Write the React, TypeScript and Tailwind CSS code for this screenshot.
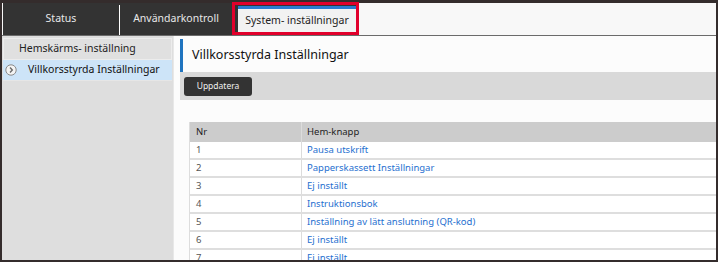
import React from "react";

const rows: [string, string][] = [
  ["1", "Pausa utskrift"],
  ["2", "Papperskassett Inställningar"],
  ["3", "Ej inställt"],
  ["4", "Instruktionsbok"],
  ["5", "Inställning av lätt anslutning (QR-kod)"],
  ["6", "Ej inställt"],
  ["7", "Ej inställt"],
];

export default function App() {
  return (
    <div className="w-[718px] h-[262px] overflow-hidden bg-[#fcfcfc] border-2 border-[#342c2c] flex flex-col font-['Noto_Sans',sans-serif]">
      {/* tab bar */}
      <div className="h-[34px] flex items-stretch bg-[#f8f8f8] border-t border-[#342c2c] border-b border-b-[#6b6b6b] shrink-0">
        <div className="ml-px w-[116px] bg-[#333333] text-[#e8e8e8] text-[10.5px] flex items-center justify-center whitespace-nowrap">Status</div>
        <div className="w-px bg-[#333333] flex flex-col">
          <div className="mt-[2px] flex-1 bg-white" />
        </div>
        <div className="w-[112px] bg-[#333333] text-[#e8e8e8] text-[10.5px] flex items-center justify-center whitespace-nowrap">Användarkontroll</div>
        <div className="w-[127px] -mt-px border-[3px] border-[#e1002b] bg-[#333333] flex">
          <div className="flex-1 ml-[3px] mt-px bg-[#f2f2f2] border-t-[3px] border-[#2a7bd0] text-[#222] text-[10.5px] flex items-center justify-center whitespace-nowrap">System- inställningar</div>
        </div>
        <div className="flex-1" />
      </div>
      {/* body */}
      <div className="flex-1 flex min-h-0">
        <div className="w-[172px] bg-[#dedede] pt-[2px] border-r border-[#e8e8e8] shrink-0">
          <div className="h-[22px] mx-px border border-[#ececec] bg-[#e0e0e0] flex items-center pl-[15px] text-[10.5px] text-[#222] whitespace-nowrap">Hemskärms- inställning</div>
          <div className="h-[21px] mx-px bg-[#cde4f8] border-b border-[#e6e6e6] flex items-center text-[10.5px] text-[#111] whitespace-nowrap">
            <svg width="12" height="12" viewBox="0 0 12 12" className="ml-[2px] mr-[11px] shrink-0">
              <circle cx="6" cy="6" r="5.2" fill="#f4f4f4" stroke="#8a8a8a" strokeWidth="1" />
              <path d="M5 3.5 L7.3 6 L5 8.5" fill="none" stroke="#6a6a6a" strokeWidth="1.4" />
            </svg>
            Villkorsstyrda Inställningar
          </div>
        </div>
        <div className="flex-1 flex flex-col pl-[6px] pt-[3px] min-w-0">
          <div className="h-[33px] bg-[#fcfcfc] border-l-[3px] border-[#1f74bf] flex items-center pl-[9px] text-[12.5px] text-[#111] shrink-0 whitespace-nowrap">Villkorsstyrda Inställningar</div>
          <div className="h-[28px] bg-[#d9d9d9] flex items-center pl-[4px] shrink-0">
            <div className="h-[19px] w-[68px] rounded-[3px] bg-[#333333] text-[#f0f0f0] text-[8.5px] flex items-center justify-center">Uppdatera</div>
          </div>
          <div className="mt-[22px] ml-[9px] border-l border-[#dddddd] text-[9.5px]">
            <div className="h-[20px] bg-[#cccccc] flex items-center text-[#222]">
              <div className="w-[112px] pl-[6px] border-r border-[#dcdcdc] h-full flex items-center">Nr</div>
              <div className="pl-[5px]">Hem-knapp</div>
            </div>
            {rows.map(([n, t]) => (
              <div key={n} className="h-[18px] flex items-center bg-white border-b-2 border-[#dedede]">
                <div className="w-[112px] pl-[6px] border-r border-[#dcdcdc] h-full flex items-center text-[#555]">{n}</div>
                <div className="pl-[5px] text-[#1f6fcf] whitespace-nowrap">{t}</div>
              </div>
            ))}
          </div>
        </div>
      </div>
    </div>
  );
}
